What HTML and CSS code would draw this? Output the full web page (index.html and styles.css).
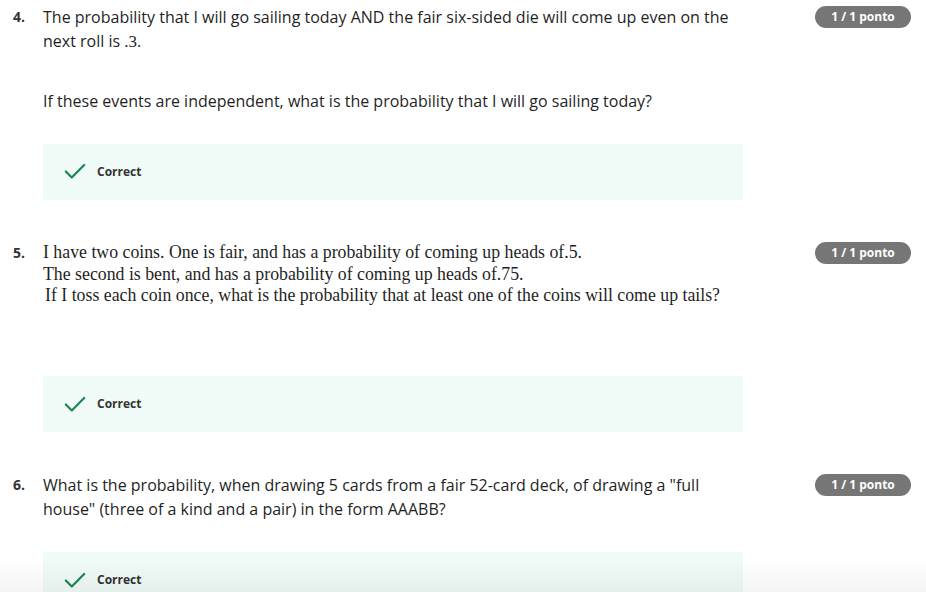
FILE: index.html
```html
<!DOCTYPE html>
<html>
<head>
<meta charset="utf-8">
<link rel="stylesheet" href="styles.css">
</head>
<body>
<div class="list">
  <div class="q q4">
    <div class="num">4.</div>
    <div class="body">
      <div class="text">The probability that I will go sailing today AND the fair six-sided die will come up even on the next roll is <span class="math">.3</span>.</div>
      <div class="text sub">If these events are independent, what is the probability that I will go sailing today?</div>
      <div class="feedback"><svg class="check" viewBox="0 0 24 24" width="22" height="22"><path d="M2 12.5 L8.5 19 L22 5.5" fill="none" stroke="#1b8754" stroke-width="2.4" stroke-linecap="round" stroke-linejoin="round"/></svg><span>Correct</span></div>
    </div>
    <div class="badge">1 / 1 ponto</div>
  </div>

  <div class="q q5">
    <div class="num">5.</div>
    <div class="body">
      <div class="serif">I have two coins. One is fair, and has a probability of coming up heads of.5.<br>The second is bent, and has a probability of coming up heads of.75.<br><span class="ind">If I toss each coin once, what is the probability that at least one of the coins will come up tails?</span></div>
      <div class="feedback"><svg class="check" viewBox="0 0 24 24" width="22" height="22"><path d="M2 12.5 L8.5 19 L22 5.5" fill="none" stroke="#1b8754" stroke-width="2.4" stroke-linecap="round" stroke-linejoin="round"/></svg><span>Correct</span></div>
    </div>
    <div class="badge">1 / 1 ponto</div>
  </div>

  <div class="q q6">
    <div class="num">6.</div>
    <div class="body">
      <div class="text">What is the probability, when drawing 5 cards from a fair 52-card deck, of drawing a "full house" (three of a kind and a pair) in the form AAABB?</div>
      <div class="feedback"><svg class="check" viewBox="0 0 24 24" width="22" height="22"><path d="M2 12.5 L8.5 19 L22 5.5" fill="none" stroke="#1b8754" stroke-width="2.4" stroke-linecap="round" stroke-linejoin="round"/></svg><span>Correct</span></div>
    </div>
    <div class="badge">1 / 1 ponto</div>
  </div>
</div>
<div class="fade"></div>
</body>
</html>
```
FILE: styles.css
```css
html, body {
  margin: 0;
  padding: 0;
  background: #ffffff;
  overflow: hidden;
}
body {
  font-family: "Open Sans", "Liberation Sans", sans-serif;
  color: #1f1f1f;
  width: 926px;
  height: 592px;
}
.list {
  padding-top: 5px;
  display: flex;
  flex-direction: column;
  gap: 41px;
}
.q {
  display: grid;
  grid-template-columns: 43px 700px 1fr;
  align-items: start;
}
.num {
  font-weight: 700;
  font-size: 14px;
  color: #333;
  line-height: 24px;
  padding-left: 13px;
}
.q5 .num { line-height: 22px; padding-top: 1px; }
.body {
  display: flex;
  flex-direction: column;
}
.text {
  font-size: 16px;
  line-height: 24px;
  color: #1f1f1f;
}
.math {
  font-family: "Liberation Serif", serif;
  font-size: 17px;
  line-height: 1;
}
.sub {
  margin-top: 36px;
}
.serif {
  font-family: "Liberation Serif", "Times New Roman", serif;
  font-size: 17.8px;
  line-height: 21.5px;
  padding-top: 1px;
  color: #1f1f1f;
}
.ind { padding-left: 2px; }
.feedback {
  margin-top: 31px;
  height: 56px;
  box-sizing: border-box;
  padding-bottom: 2px;
  background: #f0faf6;
  display: flex;
  align-items: center;
  padding-left: 21px;
  gap: 11px;
  font-size: 12px;
  font-weight: 700;
  color: #333;
}
.q5 .feedback { margin-top: 69px; padding-bottom: 0; }
.q6 .feedback { padding-bottom: 0; }
.check { display: block; }
.badge {
  justify-self: end;
  margin-right: 15px;
  margin-top: 1px;
  width: 96px;
  height: 22px;
  border-radius: 11px;
  background: #767676;
  color: #fff;
  font-size: 12px;
  font-weight: 700;
  line-height: 22px;
  text-align: center;
}
.fade {
  position: fixed;
  left: 0;
  right: 0;
  bottom: 0;
  height: 34px;
  background: linear-gradient(to bottom, rgba(0,0,0,0), rgba(0,0,0,0.045));
  pointer-events: none;
}
```
